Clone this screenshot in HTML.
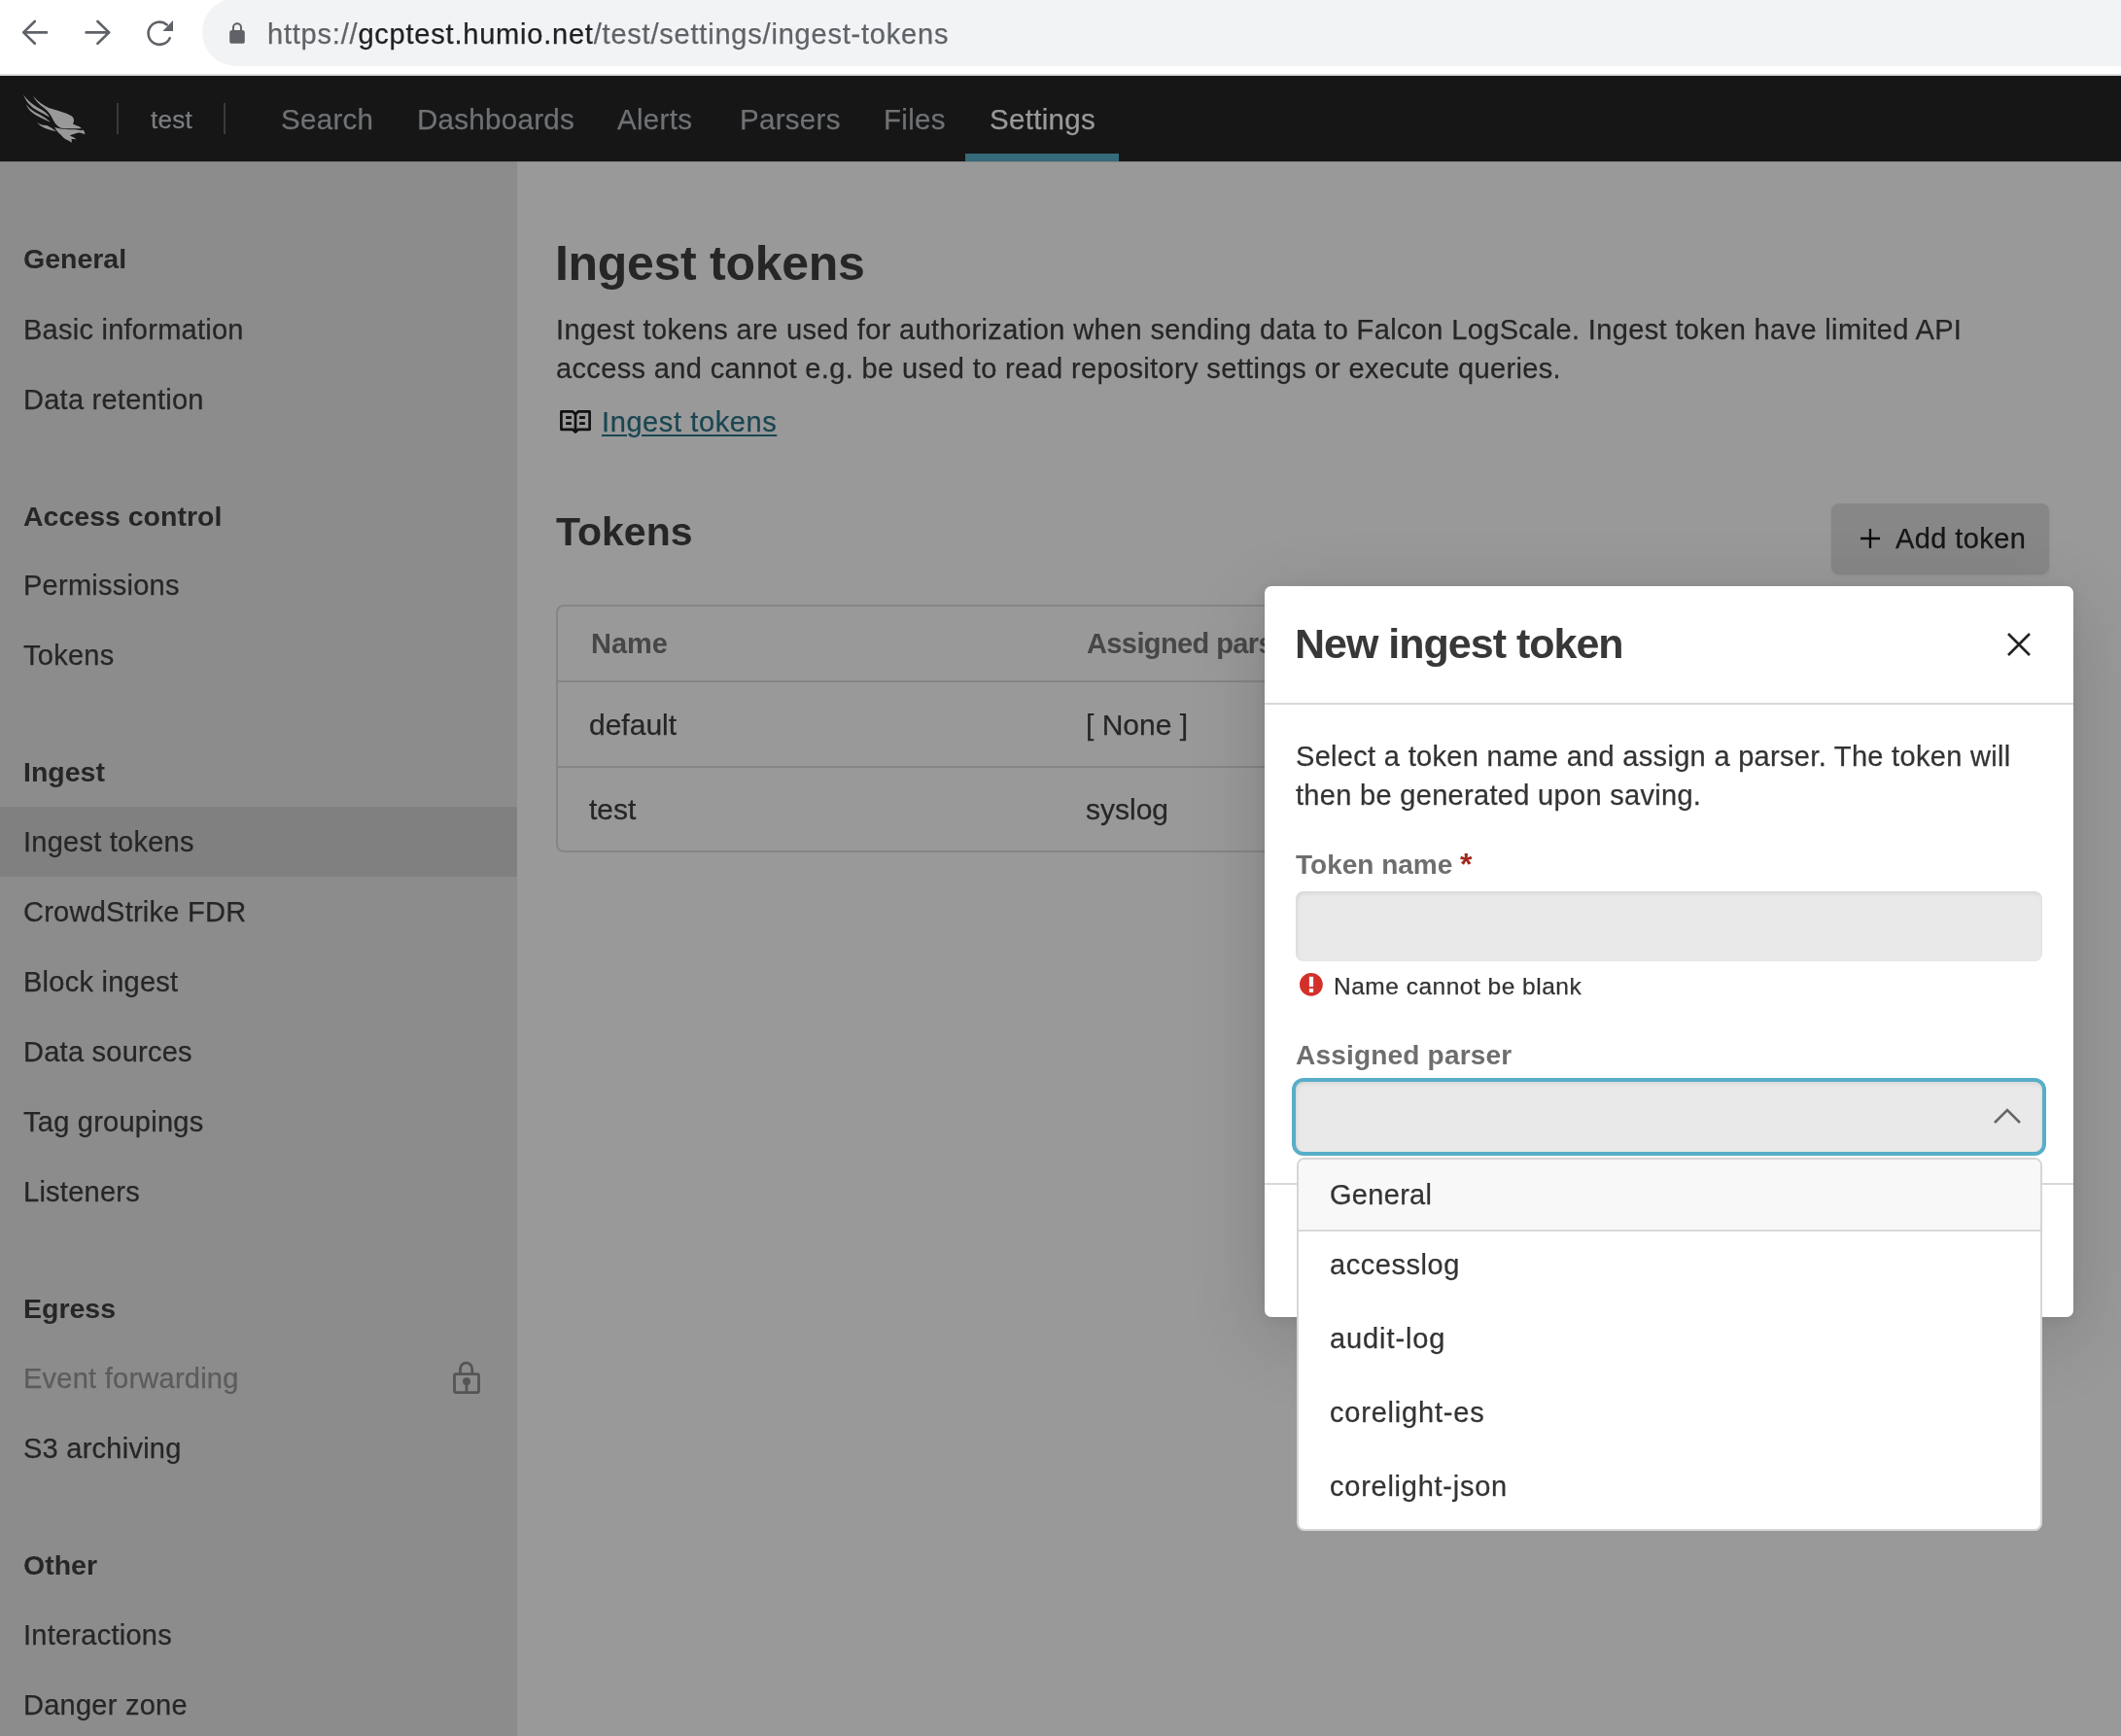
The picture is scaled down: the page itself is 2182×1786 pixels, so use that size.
<!DOCTYPE html>
<html><head><meta charset="utf-8">
<style>
*{margin:0;padding:0;box-sizing:border-box}
html,body{width:2182px;height:1786px;overflow:hidden;background:#999}
body{font-family:"Liberation Sans",sans-serif;position:relative;will-change:transform}
.a{position:absolute}
.t{position:absolute;white-space:nowrap;line-height:1}
.t{-webkit-text-stroke:0.25px currentColor}
.sh,.t[style*="bold"]{-webkit-text-stroke:0}
#chrome{left:0;top:0;width:2182px;height:76px;background:#fff}
#chromeline{left:0;top:76px;width:2182px;height:2px;background:#dcdde0}
#pill{left:208px;top:-2px;width:2100px;height:70px;border-radius:35px;background:#f1f3f4}
#nav{left:0;top:78px;width:2182px;height:88px;background:#161616}
.nv{font-size:29.5px;letter-spacing:0.3px;color:#6f7275;top:108px}
#side{left:0;top:166px;width:532px;height:1620px;background:#8c8c8c}
.sh{font-size:28.5px;font-weight:bold;color:#262626;left:24px}
.si{font-size:29px;letter-spacing:0.25px;color:#262626;left:24px}
#main{left:532px;top:166px;width:1650px;height:1620px;background:#999}
</style></head><body>
<div class="a" id="chrome"></div>
<div class="a" id="chromeline"></div>
<div class="a" id="pill"></div>
<div class="a" id="nav"></div>
<div class="a" id="side"></div>
<div class="a" id="main"></div>
<div class="a" style="left:0;top:166px;width:2182px;height:1px;background:rgba(0,0,0,0.12)"></div>

<!-- URL -->
<div class="t" style="left:275px;top:21px;font-size:29px;letter-spacing:0.79px;color:#5f6368">https://<span style="color:#202124">gcptest.humio.net</span>/test/settings/ingest-tokens</div>

<!-- nav -->
<div class="t nv" style="left:155px;top:110px;font-size:26px;color:#7b7e81">test</div>
<div class="a" style="left:120px;top:106px;width:2px;height:32px;background:#3a3a3a"></div>
<div class="a" style="left:230px;top:106px;width:2px;height:32px;background:#3a3a3a"></div>
<div class="t nv" style="left:289px">Search</div>
<div class="t nv" style="left:429px">Dashboards</div>
<div class="t nv" style="left:635px">Alerts</div>
<div class="t nv" style="left:761px">Parsers</div>
<div class="t nv" style="left:909px">Files</div>
<div class="t nv" style="left:1018px;color:#9a9a9a">Settings</div>
<div class="a" style="left:993px;top:158px;width:158px;height:8px;background:#356b7a"></div>

<!-- sidebar -->
<div class="a" style="left:0;top:830px;width:532px;height:72px;background:#808080"></div>
<div class="t sh" style="top:252px">General</div>
<div class="t si" style="top:325px">Basic information</div>
<div class="t si" style="top:397px">Data retention</div>
<div class="t sh" style="top:517px">Access control</div>
<div class="t si" style="top:588px">Permissions</div>
<div class="t si" style="top:660px">Tokens</div>
<div class="t sh" style="top:780px">Ingest</div>
<div class="t si" style="top:852px">Ingest tokens</div>
<div class="t si" style="top:924px">CrowdStrike FDR</div>
<div class="t si" style="top:996px">Block ingest</div>
<div class="t si" style="top:1068px">Data sources</div>
<div class="t si" style="top:1140px">Tag groupings</div>
<div class="t si" style="top:1212px">Listeners</div>
<div class="t sh" style="top:1332px">Egress</div>
<div class="t si" style="top:1404px;color:#5c5c5c">Event forwarding</div>
<div class="t si" style="top:1476px">S3 archiving</div>
<div class="t sh" style="top:1596px">Other</div>
<div class="t si" style="top:1668px">Interactions</div>
<div class="t si" style="top:1740px">Danger zone</div>

<!-- browser icons -->
<svg class="a" style="left:0;top:0" width="200" height="76" viewBox="0 0 200 76">
<g fill="none" stroke="#5f6368" stroke-width="2.6" stroke-linecap="round" stroke-linejoin="round">
<path d="M48 33.4H24.2M35.8 22L24.2 33.4L35.8 44.8"/>
<path d="M88.6 33.4H112.2M100.4 22L112.2 33.4L100.4 44.8"/>
<path d="M174.7 39.2A11.6 11.6 0 1 1 171.7 25.4"/>
</g>
<path d="M178 21V32H167.4Z" fill="#5f6368"/>
</svg>
<svg class="a" style="left:230px;top:18px" width="30" height="32" viewBox="0 0 30 32">
<rect x="6.2" y="13" width="15.6" height="13.8" rx="2.6" fill="#5f6368"/>
<path d="M10 14V10.2A4 4 0 0 1 18 10.2V14" fill="none" stroke="#5f6368" stroke-width="2"/>
</svg>
<!-- logo -->
<svg class="a" style="left:18px;top:92px" width="76" height="60" viewBox="0 0 2121 1674">
<g fill="#999">
<path d="M170 140C260 310 450 440 650 560C800 650 890 720 925 810C870 760 720 690 560 600C380 500 230 340 170 140Z"/>
<path d="M250 420C330 570 520 660 700 760C820 830 900 880 945 945C880 910 760 860 620 790C450 700 290 590 250 420Z"/>
<path d="M450 190C570 340 720 450 900 530C1150 610 1400 660 1560 770C1640 840 1630 930 1590 990L1700 1040C1790 1070 1830 1100 1830 1120L1650 1120C1500 1125 1350 1130 1260 1110C1150 1080 1060 960 990 810C940 710 880 620 760 530C620 430 500 320 450 190Z"/>
<path d="M1060 1080C1200 1140 1400 1150 1650 1150C1760 1160 1850 1200 1880 1160C1920 1200 1940 1260 1935 1300C1900 1270 1840 1240 1760 1240C1680 1250 1580 1290 1500 1325C1580 1360 1660 1390 1690 1440C1640 1420 1580 1420 1545 1420C1560 1460 1560 1500 1550 1530C1510 1490 1460 1460 1380 1430C1300 1380 1240 1290 1180 1250C1130 1190 1090 1130 1060 1080Z"/>
<path d="M560 950C650 1010 760 1040 840 1030C950 1080 1050 1140 1110 1210C1000 1180 880 1150 780 1110C690 1070 610 1010 560 950Z"/>
</g>
</svg>
<!-- book icon -->
<svg class="a" style="left:566px;top:410px" width="60" height="46" viewBox="0 0 60 46">
<path d="M11.4 13.4H23.2L26 16.2L28.8 13.4H40.6V31.8H28.8L26 34.6L23.2 31.8H11.4Z" fill="none" stroke="#111" stroke-width="2.7" stroke-linejoin="round"/>
<path d="M26 16V33" stroke="#111" stroke-width="2.7"/>
<g fill="#111"><rect x="16.1" y="18.1" width="5.8" height="2.9"/><rect x="16.1" y="24.2" width="5.8" height="2.8"/><rect x="30.1" y="18.1" width="5.8" height="2.9"/><rect x="30.1" y="24.2" width="5.8" height="2.8"/></g>
</svg>
<!-- sidebar lock -->
<svg class="a" style="left:456px;top:1396px" width="48" height="44" viewBox="0 0 48 44">
<rect x="11.5" y="17.6" width="25" height="19" rx="1.5" fill="none" stroke="#555" stroke-width="2.8"/>
<path d="M17.5 17.6V12.3A6.1 6.1 0 0 1 29.7 12.3V17.6" fill="none" stroke="#555" stroke-width="2.8"/>
<circle cx="24" cy="25.3" r="4" fill="#555"/><rect x="22.6" y="27" width="2.8" height="9" fill="#555"/>
</svg>

<!-- main content -->
<div class="t" style="left:571px;top:246px;font-size:50px;letter-spacing:-0.3px;font-weight:bold;color:#262626">Ingest tokens</div>
<div class="t" style="left:572px;top:325px;font-size:29px;letter-spacing:0.36px;color:#262626">Ingest tokens are used for authorization when sending data to Falcon LogScale. Ingest token have limited API</div>
<div class="t" style="left:572px;top:365px;font-size:29px;letter-spacing:0.36px;color:#262626">access and cannot e.g. be used to read repository settings or execute queries.</div>
<svg class="a" style="left:575px;top:420px" width="34" height="28" viewBox="0 0 34 28"></svg>
<div class="t" style="left:619px;top:420px;font-size:29px;letter-spacing:0.6px;color:#1a4652;text-decoration:underline;text-underline-offset:3px;text-decoration-thickness:2px">Ingest tokens</div>
<div class="t" style="left:572px;top:527px;font-size:41px;font-weight:bold;color:#262626">Tokens</div>
<div class="a" style="left:1884px;top:518px;width:224px;height:73px;border-radius:8px;background:#878787;box-shadow:0 1px 3px rgba(0,0,0,0.08)"></div>
<div class="t" style="left:1950px;top:540px;font-size:29px;letter-spacing:0.4px;color:#161616">Add token</div>
<!-- plus -->
<svg class="a" style="left:1900px;top:530px" width="50" height="50" viewBox="0 0 50 50"><path d="M14 24H34M24 14V34" stroke="#0a0a0a" stroke-width="2.3"/></svg>
<div class="a" style="left:572px;top:622px;width:1536px;height:255px;border:2px solid #858585;border-radius:8px"></div>
<div class="a" style="left:574px;top:700px;width:1532px;height:2px;background:#858585"></div>
<div class="a" style="left:574px;top:788px;width:1532px;height:2px;background:#858585"></div>
<div class="t" style="left:608px;top:648px;font-size:29px;font-weight:bold;color:#474747">Name</div>
<div class="t" style="left:1118px;top:648px;font-size:29px;letter-spacing:-0.6px;font-weight:bold;color:#474747">Assigned parser</div>
<div class="t" style="left:606px;top:731px;font-size:30px;color:#262626">default</div>
<div class="t" style="left:1117px;top:731px;font-size:30px;color:#262626">[ None ]</div>
<div class="t" style="left:606px;top:818px;font-size:30px;color:#262626">test</div>
<div class="t" style="left:1117px;top:818px;font-size:30px;color:#262626">syslog</div>

<!-- modal -->
<div class="a" style="left:1301px;top:603px;width:832px;height:752px;border-radius:7px;background:#fff;box-shadow:0 2px 12px rgba(0,0,0,0.08),0 20px 80px rgba(0,0,0,0.16)"></div>
<div class="t" style="left:1332px;top:641px;font-size:43px;letter-spacing:-1px;font-weight:bold;color:#383838">New ingest token</div>
<svg class="a" style="left:2064px;top:650px" width="26" height="26" viewBox="0 0 26 26"><path d="M2 2L24 24M24 2L2 24" stroke="#222" stroke-width="2.6"/></svg>
<div class="a" style="left:1301px;top:723px;width:832px;height:2px;background:#d9d9d9"></div>
<div class="t" style="left:1333px;top:764px;font-size:29px;letter-spacing:0.31px;color:#333">Select a token name and assign a parser. The token will</div>
<div class="t" style="left:1333px;top:804px;font-size:29px;letter-spacing:0.31px;color:#333">then be generated upon saving.</div>
<div class="t" style="left:1333px;top:876px;font-size:28px;font-weight:bold;color:#6e6e6e">Token name</div>
<div class="t" style="left:1502px;top:873px;font-size:32px;font-weight:bold;color:#a3271d">*</div>
<div class="a" style="left:1333px;top:917px;width:768px;height:72px;border-radius:8px;background:#e9e9e9;box-shadow:inset 1px 2px 4px rgba(0,0,0,0.09)"></div>
<svg class="a" style="left:1336px;top:1001px" width="26" height="26" viewBox="0 0 26 26"><circle cx="12.9" cy="11.9" r="11.9" fill="#d4302a"/><rect x="10.9" y="3.8" width="4.2" height="10.3" fill="#fff"/><rect x="10.9" y="16" width="4.2" height="4" fill="#fff"/></svg>
<div class="t" style="left:1372px;top:1003px;font-size:24.5px;letter-spacing:0.5px;color:#333">Name cannot be blank</div>
<div class="t" style="left:1333px;top:1072px;font-size:28px;letter-spacing:0.2px;font-weight:bold;color:#6e6e6e">Assigned parser</div>
<div class="a" style="left:1329px;top:1109px;width:776px;height:80px;border-radius:12px;background:#e9e9e9;border:4px solid #58aec9;box-shadow:inset 1px 2px 4px rgba(0,0,0,0.09)"></div>
<svg class="a" style="left:2050px;top:1138px" width="30" height="20" viewBox="0 0 30 20"><path d="M2 17L15 4L28 17" fill="none" stroke="#666" stroke-width="2.6"/></svg>
<div class="a" style="left:1301px;top:1217px;width:832px;height:2px;background:#d9d9d9"></div>
<div class="a" style="left:1334px;top:1191px;width:767px;height:384px;border-radius:8px;background:#fff;border:2px solid #d6d6d6;overflow:hidden">
  <div class="a" style="left:0;top:0;width:100%;height:74px;background:#f8f8f8;border-bottom:2px solid #d9d9d9"></div>
</div>
<div class="t" style="left:1368px;top:1215px;font-size:29px;letter-spacing:0.3px;color:#333">General</div>
<div class="t" style="left:1368px;top:1287px;font-size:29px;letter-spacing:0.55px;color:#333">accesslog</div>
<div class="t" style="left:1368px;top:1363px;font-size:29px;letter-spacing:0.9px;color:#333">audit-log</div>
<div class="t" style="left:1368px;top:1439px;font-size:29px;letter-spacing:0.8px;color:#333">corelight-es</div>
<div class="t" style="left:1368px;top:1515px;font-size:29px;letter-spacing:0.75px;color:#333">corelight-json</div>

</body></html>
